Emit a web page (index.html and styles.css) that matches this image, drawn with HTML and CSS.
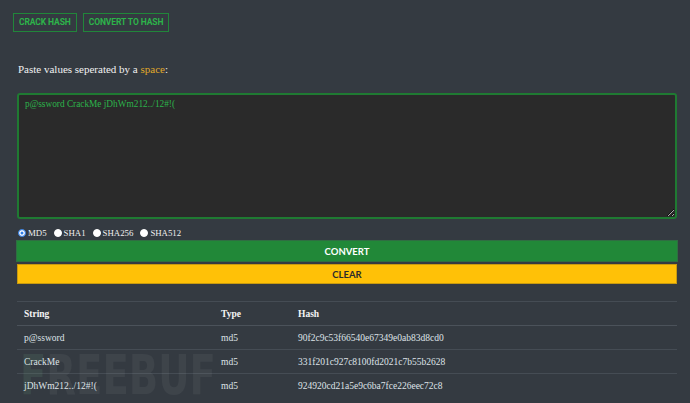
FILE: index.html
```html
<!DOCTYPE html>
<html>
<head>
<meta charset="utf-8">
<link rel="stylesheet" href="styles.css">
</head>
<body>
<nav class="nav">
  <button class="nav-btn">CRACK HASH</button>
  <button class="nav-btn">CONVERT TO HASH</button>
</nav>
<main class="main">
  <p class="label">Paste values seperated by a <span class="hl">space</span>:</p>
  <textarea class="input">p@ssword CrackMe jDhWm212../12#!(</textarea>
  <div class="radios">
    <label class="radio"><span class="dot checked"></span>MD5</label>
    <label class="radio"><span class="dot"></span>SHA1</label>
    <label class="radio"><span class="dot"></span>SHA256</label>
    <label class="radio"><span class="dot"></span>SHA512</label>
  </div>
  <button class="btn btn-convert">CONVERT</button>
  <button class="btn btn-clear">CLEAR</button>
  <table class="results">
    <thead>
      <tr><th class="c1">String</th><th class="c2">Type</th><th>Hash</th></tr>
    </thead>
    <tbody>
      <tr><td>p@ssword</td><td>md5</td><td>90f2c9c53f66540e67349e0ab83d8cd0</td></tr>
      <tr><td>CrackMe</td><td>md5</td><td>331f201c927c8100fd2021c7b55b2628</td></tr>
      <tr><td>jDhWm212../12#!(</td><td>md5</td><td>924920cd21a5e9c6ba7fce226eec72c8</td></tr>
    </tbody>
  </table>
</main>
<div class="watermark" aria-hidden="true"><span class="wm-f">F</span>REEBUF</div>
</body>
</html>
```
FILE: styles.css
```css
html, body {
  margin: 0;
  padding: 0;
  background: #343a41;
  height: 100%;
  overflow: hidden;
}
body {
  font-family: "Liberation Serif", "DejaVu Serif", serif;
  color: #e9ecef;
  position: relative;
}
.nav {
  display: flex;
  gap: 6px;
  padding: 13px 13px 0 13px;
}
.nav-btn {
  background: transparent;
  border: 1px solid #21863a;
  color: #2db34a;
  font-family: Roboto, "Open Sans", sans-serif;
  font-weight: 700;
  font-size: 8.5px;
  letter-spacing: -0.1px;
  height: 19px;
  padding: 0 5px;
  line-height: 17px;
  margin: 0;
}
.main {
  padding: 0 13px 0 17px;
  display: flex;
  flex-direction: column;
}
.label {
  margin: 30px 0 0 1px;
  font-size: 11px;
  line-height: 14px;
  color: #f1f1f1;
}
.hl { color: #e0a92a; }
.input {
  display: block;
  margin-top: 17px;
  height: 126px;
  box-sizing: border-box;
  background: #2a2a2a;
  border: 2px solid #1f7a32;
  border-radius: 3px;
  color: #2cb34a;
  font-family: "Liberation Serif", "DejaVu Serif", serif;
  font-size: 9.3px;
  padding: 4px 6px;
  resize: vertical;
  outline: none;
}
.radios {
  display: flex;
  align-items: center;
  height: 16px;
  margin-top: 6px;
  padding-left: 1px;
  font-size: 8.8px;
  color: #f0f0f0;
}
.radio {
  display: flex;
  align-items: center;
  gap: 2px;
  margin-right: 7px;
}
.dot {
  width: 6px;
  height: 6px;
  border-radius: 50%;
  background: #fff;
  border: 1px solid #fff;
  display: inline-block;
}
.dot.checked {
  background: #fff;
  border: 1px solid #2f7ee6;
  box-shadow: inset 0 0 0 1.5px #fff, inset 0 0 0 4px #2f7ee6;
}
.btn {
  display: block;
  border: 1px solid transparent;
  font-family: Lato, "Open Sans", sans-serif;
  font-weight: 700;
  font-size: 9.5px;
  margin: 0;
  padding: 0;
}
.btn-convert {
  margin: -1px -1px 0 -1px;
  height: 22px;
  background: #218838;
  border-color: #2f6e42;
  color: #fff;
}
.btn-clear {
  margin-top: 2px;
  height: 20px;
  background: #ffc107;
  border-color: #c89a10;
  color: #2b2b2b;
}
.results {
  margin-top: 17px;
  width: 100%;
  border-collapse: collapse;
  font-size: 9.5px;
  color: #dfe3e8;
}
.results th, .results td {
  text-align: left;
  padding: 0 7px;
  height: 23px;
  border-top: 1px solid #454c54;
}
.results th {
  font-weight: 700;
  color: #f5f5f5;
  height: 23px;
  border-bottom: 1px solid #4b525a;
}
.c1 { width: 183px; }
.c2 { width: 63px; }
.watermark {
  position: absolute;
  left: 20px;
  top: 351px;
  font-family: "DejaVu Sans Condensed", "DejaVu Sans", sans-serif;
  font-weight: 700;
  font-size: 55px;
  line-height: 48px;
  transform: scaleX(0.78);
  transform-origin: left top;
  color: rgba(255, 255, 255, 0.05);
  pointer-events: none;
  user-select: none;
}
.wm-f { color: rgba(120, 190, 140, 0.12); }
```
